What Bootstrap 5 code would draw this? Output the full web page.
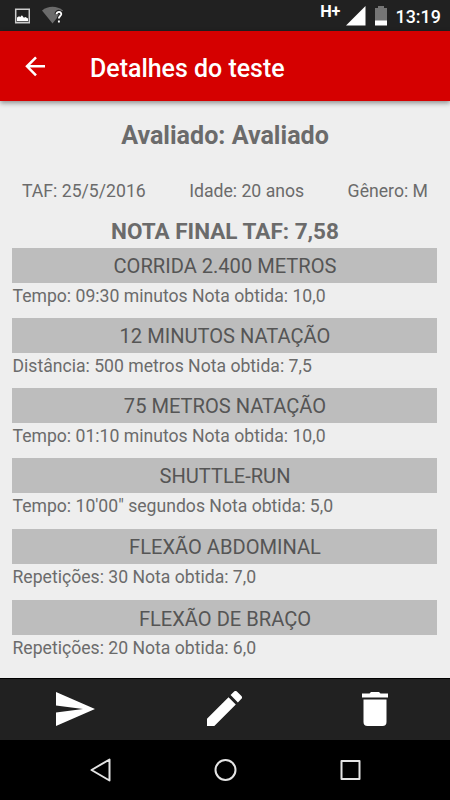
<!DOCTYPE html>
<html lang="pt-BR">
<head>
<meta charset="utf-8">
<meta name="viewport" content="width=device-width, initial-scale=1">
<title>Detalhes do teste</title>
<link href="https://cdn.jsdelivr.net/npm/bootstrap@5.3.0/dist/css/bootstrap.min.css" rel="stylesheet">
<style>
body{font-family:Roboto,"Liberation Sans",sans-serif;background:#eee;color:#6b6b6b}
svg{display:block;flex:none}
.screen{width:450px;height:800px}
.statusbar{height:31px;background:#212121;padding-left:14px;padding-right:10px}
.statusbar .wifi{margin-left:12px}
.statusbar .signal{margin-left:5px}
.statusbar .battery{margin-left:9px;margin-right:9px}
.statusbar .net{font-size:16.300px;font-weight:700;line-height:16px;margin-top:-8px}
.statusbar .clock{font-size:17.900px;font-weight:500;line-height:31px;padding-top:1px;width:44.500px;white-space:nowrap}
.appbar{height:70px;background:#d50000;box-shadow:0 2px 5px rgba(0,0,0,.42);padding-left:24px;z-index:1}
.appbar h1{font-size:24.950px;font-weight:500;line-height:70px;margin-left:43px;padding-top:5px}
.details{padding:0 13px 0 12px}
.person{font-size:25.100px;font-weight:700;line-height:30px;margin-top:20px;padding-left:1px}
.meta{font-size:17.650px;line-height:22px;margin-top:29px;padding:0 9px 0 10px}
.final{font-size:22.500px;font-weight:700;line-height:26px;margin-top:16px;margin-bottom:4px;padding-left:1px}
.test{height:70px}
.test.tall{height:71px}
.test h2{height:35px;background:#bdbdbd;color:#555;font-size:20.100px;font-weight:400;line-height:37px;padding-left:1px}
.test:last-child h2{line-height:38px}
.test p{font-size:17.620px;line-height:26px;padding-left:.5px}
.actions{height:62px;background:#212121;border-top:1px solid #000;padding-bottom:2px}
.sysnav{height:60px;background:#000}
</style>
</head>
<body>
<div class="screen d-flex flex-column overflow-hidden">
  <div class="statusbar d-flex align-items-center text-white">
    <svg width="16" height="16" viewBox="0 0 16 16"><path d="M1.700 1.200h13.600v13.600H1.700z" fill="none" stroke="#ccc" stroke-width="1.500"/><path d="M3 13.200V9.500l2-1.300 1.300.9 1.600-1.800 2 2.400 1.500-.8 2.600 1.700v2.600z" fill="#fff"/></svg>
    <svg class="wifi" width="24" height="20" viewBox="0 0 24 20"><path d="M0 4.500C6-.5 15-.5 21 4.500L10.500 17.500z" fill="#6b6b6b"/><path d="M14.500 8.300c.2-3.500 5.200-3 4.700.1-.3 1.600-2.500 2.100-2.300 4.100M16.900 14.600v1.800" fill="none" stroke="#212121" stroke-width="4"/><path d="M14.500 8.300c.2-3.500 5.200-3 4.700.1-.3 1.600-2.500 2.100-2.300 4.100M16.900 14.600v1.800" fill="none" stroke="#fff" stroke-width="1.900"/></svg>
    <span class="net ms-auto">H+</span>
    <svg class="signal" width="20" height="20" viewBox="0 0 20 20"><path d="M0 19.500L19.500 0v19.500z" fill="#fff"/></svg>
    <svg class="battery" width="12" height="20" viewBox="0 0 12 20"><path d="M0 2h3V0h6v2h3v13H0z" fill="#757575"/><path d="M0 14.500h12v5H0z" fill="#fff"/></svg>
    <span class="clock">13:19</span>
  </div>
  <header class="appbar d-flex align-items-center text-white position-relative">
    <svg width="23" height="22" viewBox="0 0 23 22"><path d="M21 11.300H3M12 2.300l-9 9 9 9" fill="none" stroke="#fff" stroke-width="2.500"/></svg>
    <h1 class="mb-0">Detalhes do teste</h1>
  </header>
  <main class="details flex-grow-1 overflow-hidden">
    <div class="person text-center">Avaliado: Avaliado</div>
    <div class="meta d-flex justify-content-between"><span>TAF: 25/5/2016</span><span>Idade: 20 anos</span><span>Gênero: M</span></div>
    <div class="final text-center">NOTA FINAL TAF: 7,58</div>
    <section class="test"><h2 class="text-center mb-0">CORRIDA 2.400 METROS</h2><p class="mb-0">Tempo: 09:30 minutos Nota obtida: 10,0</p></section>
    <section class="test"><h2 class="text-center mb-0">12 MINUTOS NATAÇÃO</h2><p class="mb-0">Distância: 500 metros Nota obtida: 7,5</p></section>
    <section class="test"><h2 class="text-center mb-0">75 METROS NATAÇÃO</h2><p class="mb-0">Tempo: 01:10 minutos Nota obtida: 10,0</p></section>
    <section class="test tall"><h2 class="text-center mb-0">SHUTTLE-RUN</h2><p class="mb-0">Tempo: 10'00" segundos Nota obtida: 5,0</p></section>
    <section class="test tall"><h2 class="text-center mb-0">FLEXÃO ABDOMINAL</h2><p class="mb-0">Repetições: 30 Nota obtida: 7,0</p></section>
    <section class="test tall"><h2 class="text-center mb-0">FLEXÃO DE BRAÇO</h2><p class="mb-0">Repetições: 20 Nota obtida: 6,0</p></section>
  </main>
  <div class="actions d-flex align-items-center">
    <div class="col-4 d-flex justify-content-center"><svg width="40" height="36" viewBox="0 0 40 36"><path d="M1 1l39 17L1 35V21.500L28 18 1 14.500z" fill="#fff"/></svg></div>
    <div class="col-4 d-flex justify-content-center"><svg width="35" height="35" viewBox="3 3 18 18"><path d="M3 17.250V21h3.750L17.810 9.940l-3.750-3.750L3 17.250zM20.710 7.040a1 1 0 000-1.410l-2.340-2.340a1 1 0 00-1.410 0l-1.830 1.830 3.750 3.750 1.830-1.830z" fill="#fff"/></svg></div>
    <div class="col-4 d-flex justify-content-center"><svg width="28" height="36" viewBox="0 0 28 36"><path d="M1 2.500h7.500L10 1h8l1.500 1.500H27v4H1zM2.500 8.500h23V31q0 4-4 4h-15q-4 0-4-4z" fill="#fff"/></svg></div>
  </div>
  <div class="sysnav d-flex align-items-center justify-content-center">
    <svg width="125" height="26" viewBox="0 0 125 26"><path d="M71.500 2.500v21L53.500 13z" fill="none" stroke="#e4e4e4" stroke-width="2" stroke-linejoin="round"/></svg>
    <svg width="125" height="26" viewBox="0 0 125 26"><circle cx="62.500" cy="13" r="10" fill="none" stroke="#e4e4e4" stroke-width="2"/></svg>
    <svg width="125" height="26" viewBox="0 0 125 26"><rect x="53.500" y="4" width="18" height="18" fill="none" stroke="#e4e4e4" stroke-width="2" stroke-linejoin="round"/></svg>
  </div>
</div>
<script src="https://cdn.jsdelivr.net/npm/bootstrap@5.3.0/dist/js/bootstrap.bundle.min.js"></script>
</body>
</html>
